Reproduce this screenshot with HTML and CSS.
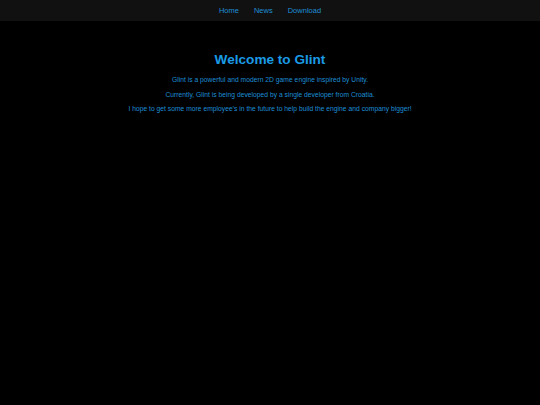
FILE: index.html
```html
<!DOCTYPE html>
<html>
<head>
<meta charset="utf-8">
<link rel="stylesheet" href="styles.css">
</head>
<body>
<nav class="nav">
  <a class="nav-link" href="#">Home</a>
  <a class="nav-link" href="#">News</a>
  <a class="nav-link" href="#">Download</a>
</nav>
<main class="content">
  <h1 class="title">Welcome to Glint</h1>
  <p class="text">Glint is a powerful and modern 2D game engine inspired by Unity.</p>
  <p class="text">Currently, Glint is being developed by a single developer from Croatia.</p>
  <p class="text">I hope to get some more employee's in the future to help build the engine and company bigger!</p>
</main>
</body>
</html>
```
FILE: styles.css
```css
html, body {
  margin: 0;
  padding: 0;
  background: #000;
  font-family: "Liberation Sans", Arial, sans-serif;
  height: 100%;
}
.nav {
  background: #111;
  height: 21px;
  display: flex;
  justify-content: center;
  align-items: center;
  gap: 15px;
}
.nav-link {
  color: #1e8fd6;
  text-decoration: none;
  font-size: 7.5px;
}
.content {
  display: flex;
  flex-direction: column;
  align-items: center;
  padding-top: 31px;
}
.title {
  margin: 0 0 5px;
  font-size: 13.6px;
  font-weight: bold;
  color: #1a9be6;
  line-height: 16px;
}
.text {
  margin: 0;
  font-size: 6.75px;
  line-height: 14.5px;
  color: #1e8fd6;
}
```
